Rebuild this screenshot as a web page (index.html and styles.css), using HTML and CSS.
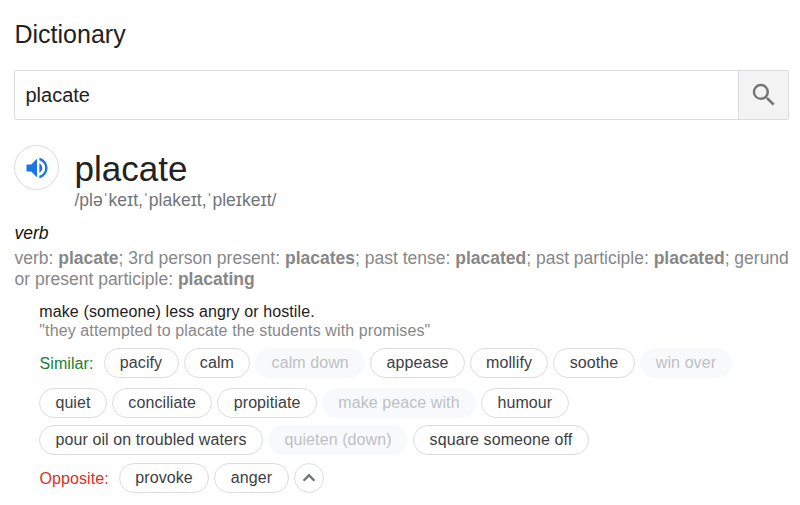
FILE: index.html
```html
<!DOCTYPE html>
<html lang="en">
<head>
<meta charset="utf-8">
<title>Dictionary</title>
<link rel="stylesheet" href="styles.css">
</head>
<body>
<main class="dictionary">
  <h1 class="title">Dictionary</h1>
  <div class="search">
    <div class="search-text">placate</div>
    <div class="search-button">
      <svg width="30" height="30" viewBox="0 0 24 24"><path d="M15.5 14h-.79l-.28-.27A6.471 6.471 0 0 0 16 9.5 6.5 6.5 0 1 0 9.5 16c1.61 0 3.09-.59 4.23-1.57l.27.28v.79l5 4.99L20.49 19l-4.99-5zm-6 0C7.01 14 5 11.99 5 9.5S7.01 5 9.5 5 14 7.01 14 9.5 11.99 14 9.5 14z"/></svg>
    </div>
  </div>
  <header class="entry">
    <div class="listen">
      <svg width="28" height="28" viewBox="0 0 24 24"><path d="M3 9v6h4l5 5V4L7 9H3zm13.500 3c0-1.770-1.020-3.290-2.500-4.030v8.050c1.480-.730 2.500-2.250 2.500-4.020zM14 3.230v2.060c2.890.860 5 3.540 5 6.710s-2.110 5.850-5 6.710v2.060c4.010-.910 7-4.490 7-8.770s-2.990-7.860-7-8.770z"/></svg>
    </div>
    <div>
      <h2 class="word">placate</h2>
      <div class="phonetic">/pləˈkeɪt,ˈplakeɪt,ˈpleɪkeɪt/</div>
    </div>
  </header>
  <div class="part">verb</div>
  <div class="forms">verb: <b>placate</b>; 3rd person present: <b>placates</b>; past tense: <b>placated</b>; past participle: <b>placated</b>; gerund<br>or present participle: <b>placating</b></div>
  <section class="sense">
    <div class="meaning">make (someone) less angry or hostile.</div>
    <div class="example">"they attempted to placate the students with promises"</div>
    <div class="row first"><span class="label similar">Similar:</span><span class="chip">pacify</span><span class="chip">calm</span><span class="chip muted">calm down</span><span class="chip">appease</span><span class="chip">mollify</span><span class="chip">soothe</span><span class="chip muted">win over</span></div>
    <div class="row second"><span class="chip">quiet</span><span class="chip">conciliate</span><span class="chip">propitiate</span><span class="chip muted">make peace with</span><span class="chip">humour</span></div>
    <div class="row third"><span class="chip">pour oil on troubled waters</span><span class="chip muted">quieten (down)</span><span class="chip">square someone off</span></div>
    <div class="row"><span class="label opposite">Opposite:</span><span class="chip">provoke</span><span class="chip">anger</span><span class="chip collapse"><svg width="24" height="24" viewBox="0 0 24 24"><path d="M12 7.600l-6.300 6.300 1.700 1.700L12 11l4.600 4.600 1.700-1.700z"/></svg></span></div>
  </section>
</main>
</body>
</html>
```
FILE: styles.css
```css
* { box-sizing: border-box; }
body {
  margin: 0;
  background: #fff;
  color: #222;
  font-family: "Liberation Sans", Arial, sans-serif;
}
svg { display: block; }
.dictionary { padding: 20px 11px 0 14px; }
.title { margin: 0 0 21px; padding-left: 0.500px; font-size: 25px; line-height: 29px; font-weight: 400; }
.search {
  display: flex;
  height: 50px;
  border: 1px solid #dadce0;
  border-radius: 2px;
}
.search-text { flex: 1; padding-left: 10.500px; font-size: 20px; line-height: 48px; }
.search-button {
  display: flex;
  align-items: center;
  justify-content: center;
  width: 50px;
  border-left: 1px solid #dadce0;
  background: #f3f3f3;
}
.search-button svg { fill: #757575; }
.entry { display: flex; gap: 15.500px; margin-top: 25px; height: 66px; }
.listen {
  display: flex;
  align-items: center;
  justify-content: center;
  width: 45px;
  height: 45px;
  border: 1px solid #dadce0;
  border-radius: 50%;
}
.listen svg { fill: #1a73e8; }
.word { margin: 4px 0 0; font-size: 35px; line-height: 39px; font-weight: 400; }
.phonetic { color: #70757a; font-size: 17.500px; line-height: 24px; white-space: nowrap; }
.part { margin-top: 12px; padding-left: 0.500px; font-size: 17.500px; line-height: 20px; font-style: italic; color: #111; }
.forms { margin-top: 5px; padding-left: 0.500px; color: #878787; font-size: 17.510px; line-height: 21px; white-space: nowrap; }
.sense { margin: 12px 0 0 25px; }
.meaning, .example { padding-left: 0.300px; font-size: 16px; line-height: 19px; letter-spacing: 0.115px; white-space: nowrap; }
.example { color: #878787; }
.row { display: flex; gap: 5px; align-items: center; height: 30px; letter-spacing: 0.090px; }
.first { margin: 8px 0 10px; }
.second { margin-bottom: 7px; }
.third { margin-bottom: 8px; }
.label { margin-right: 5px; padding: 1px 0 0 0.500px; font-size: 16px; }
.similar { color: #188038; }
.opposite { color: #d93025; }
.chip {
  height: 30px;
  padding: 0 15.500px;
  border: 1px solid #dadce0;
  border-radius: 15px;
  color: #3c4043;
  font-size: 16px;
  line-height: 28px;
  white-space: nowrap;
}
.first .chip { padding: 0 15.300px; }
.second .chip { padding: 0 15.400px; }
.muted { border-color: #f8f9fa; background: #f8f9fa; color: #bdc1c6; }
.row .collapse { display: flex; align-items: center; justify-content: center; width: 30px; padding: 0; }
.collapse svg { fill: #70757a; }
```
